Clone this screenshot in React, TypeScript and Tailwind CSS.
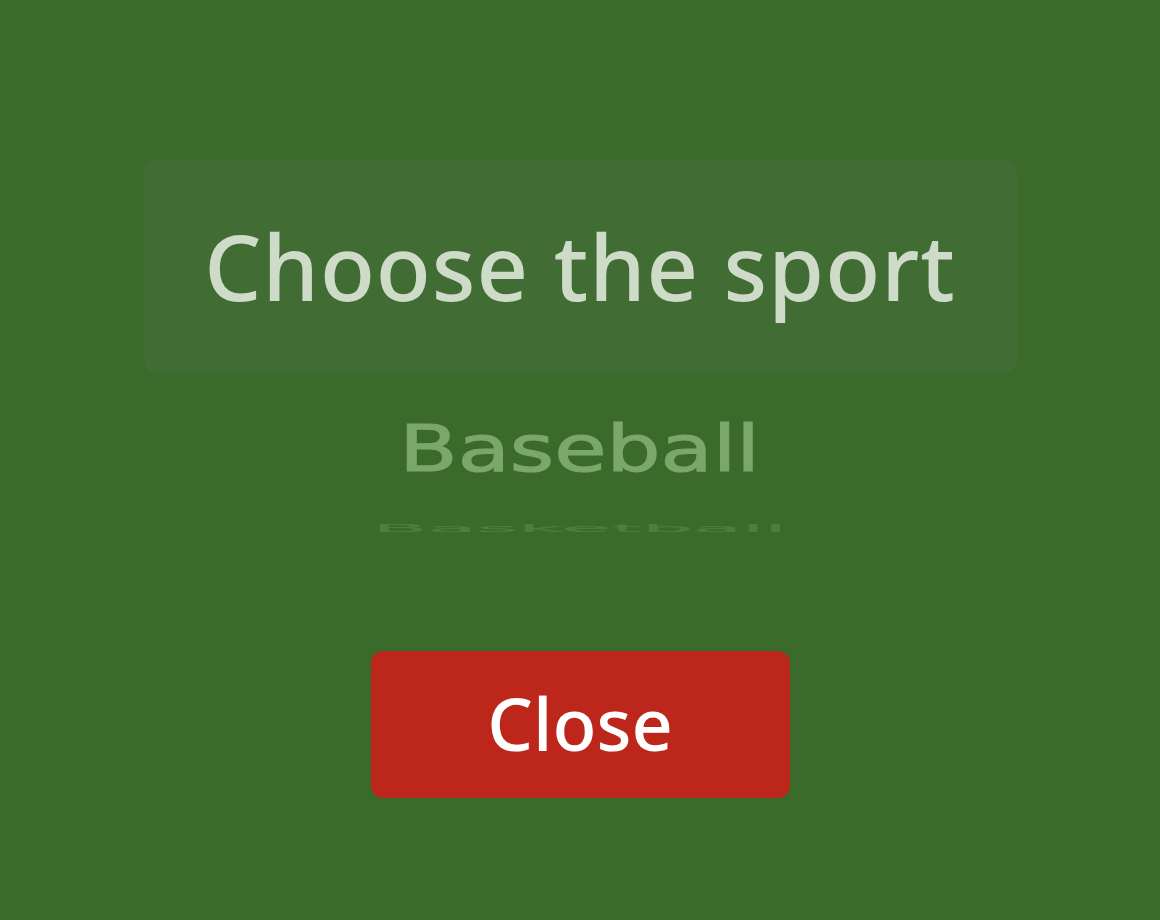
export default function App() {
  return (
    <div
      className="w-[1160px] h-[920px] bg-[#3b6b2a] flex flex-col items-center pt-[160px]"
      style={{ fontFamily: "'Noto Sans', 'Open Sans', sans-serif" }}
    >
      {/* Title card */}
      <div className="w-[873px] h-[213px] rounded-[14px] bg-[#416c33] flex items-center justify-center">
        <h1 className="text-[90px] leading-none font-medium text-[#cddbc8] pb-[2px] tracking-[1px]">Choose the sport</h1>
      </div>

      {/* Picker wheel */}
      <div
        className="h-[167px] w-[600px] flex flex-col items-center overflow-hidden"
        style={{ fontFamily: "'DejaVu Sans', Verdana, sans-serif" }}
      >
        <div className="mt-[44px] text-[64px] leading-none text-[#7ba76c] scale-x-[1.33] [-webkit-text-stroke:1.2px_#7ba76c]">
          Baseball
        </div>
        <div className="mt-[42px] text-[64px] leading-none text-[#4f7d3f] scale-x-[1.25] scale-y-[0.16] origin-top [-webkit-text-stroke:1px_#4f7d3f]">
          Basketball
        </div>
      </div>

      {/* Close button */}
      <button className="mt-[111px] w-[419px] h-[147px] rounded-[12px] bg-[#bd261a] text-white text-[72px] font-medium leading-none flex items-center justify-center pb-[4px]">
        Close
      </button>
    </div>
  );
}
